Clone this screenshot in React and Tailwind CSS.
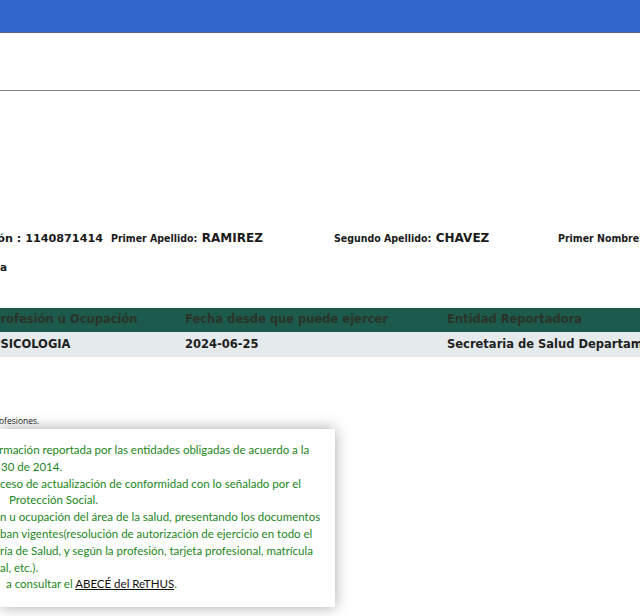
const greenLines = [
  { text: "rmación reportada por las entidades obligadas de acuerdo a la", cls: "-ml-[1px]" },
  { text: "30 de 2014.", cls: "pl-[1px]" },
  { text: "ceso de actualización de conformidad con lo señalado por el", cls: "pl-0" },
  { text: "Protección Social.", cls: "pl-[9px]" },
  { text: "n u ocupación del área de la salud, presentando los documentos", cls: "pl-0" },
  { text: "ban vigentes(resolución de autorización de ejercicio en todo el", cls: "pl-0" },
  { text: "ría de Salud, y según la profesión, tarjeta profesional, matrícula", cls: "pl-0" },
  { text: "al, etc.).", cls: "pl-0" },
];

export default function App() {
  return (
    <div className="w-[640px] h-[616px] overflow-hidden bg-white relative" style={{ fontFamily: "'DejaVu Sans', Verdana, sans-serif" }}>
      <div className="h-[33px] bg-[#3366cc] border-b border-[#56638f]" />
      <div className="h-[57px]" />
      <div className="border-t border-[#808080]" />

      <div className="h-[134px]" />

      {/* datos personales */}
      <div className="flex items-baseline whitespace-nowrap text-[#1a1a1a] h-[16px]">
        <div className="w-[103px] shrink-0 overflow-hidden flex justify-end">
          <span className="text-[11.2px] font-bold">Número de Identificación : 1140871414</span>
        </div>
        <div className="w-[224px] shrink-0 pl-[8px]" style={{ fontFamily: "'DejaVu Sans Condensed', 'DejaVu Sans', sans-serif" }}>
          <span className="text-[10.5px] font-bold">Primer Apellido:</span>{" "}
          <span className="text-[12px] font-bold" style={{ fontFamily: "'DejaVu Sans', sans-serif" }}>RAMIREZ</span>
        </div>
        <div className="w-[224px] shrink-0 pl-[7px]" style={{ fontFamily: "'DejaVu Sans Condensed', 'DejaVu Sans', sans-serif" }}>
          <span className="text-[10.5px] font-bold">Segundo Apellido:</span>{" "}
          <span className="text-[12px] font-bold" style={{ fontFamily: "'DejaVu Sans', sans-serif" }}>CHAVEZ</span>
        </div>
        <div className="shrink-0 pl-[7px]" style={{ fontFamily: "'DejaVu Sans Condensed', 'DejaVu Sans', sans-serif" }}>
          <span className="text-[10.5px] font-bold">Primer Nombre:</span>
        </div>
      </div>
      <div className="h-[19px]" />
      <div className="flex whitespace-nowrap h-[16px]">
        <div className="w-[7px] overflow-hidden flex justify-end">
          <span className="text-[10.5px] font-bold text-[#1a1a1a]">Tipo de Identificación: Cédula</span>
        </div>
      </div>

      <div className="h-[32px]" />

      {/* tabla */}
      <div className="whitespace-nowrap text-[11.5px] font-bold">
        <div className="flex items-center h-[24px] bg-[#1d5a4e] text-[#2b3327]">
          <div className="w-[185px] -ml-[8px] shrink-0">
            <span className="inline-block w-[193px]">Profesión u Ocupación</span>
          </div>
          <div className="w-[262px] ml-[8px] shrink-0">Fecha desde que puede ejercer</div>
          <div>Entidad Reportadora</div>
        </div>
        <div className="flex items-center h-[25px] bg-[#e5eaec] text-[#1f1f1f]">
          <div className="w-[185px] -ml-[8px] shrink-0">
            <span className="inline-block w-[193px]">PSICOLOGIA</span>
          </div>
          <div className="w-[262px] ml-[8px] shrink-0">2024-06-25</div>
          <div>Secretaria de Salud Departamental</div>
        </div>
      </div>

      <div className="h-[58px]" />

      <div className="h-[12px] flex items-center whitespace-nowrap text-[8.5px] text-[#222]" style={{ fontFamily: "'Open Sans', 'Noto Sans', sans-serif" }}>
        <span className="-ml-[1px]">ofesiones.</span>
      </div>

      <div className="h-[2px]" />

      {/* nota */}
      <div
        className="w-[335px] h-[178px] bg-white shadow-[0_0_14px_rgba(0,0,0,0.35)] pt-[13px] text-[11.5px] leading-[16.8px] text-[#1b861b] whitespace-nowrap overflow-hidden"
        style={{ fontFamily: "Lato, 'Open Sans', sans-serif" }}
      >
        {greenLines.map((l, i) => (
          <div key={i} className={l.cls}>{l.text}</div>
        ))}
        <div className="pl-[6px]">
          a consultar el <span className="underline text-[#111]">ABECÉ del ReTHUS</span>.
        </div>
      </div>
    </div>
  );
}
